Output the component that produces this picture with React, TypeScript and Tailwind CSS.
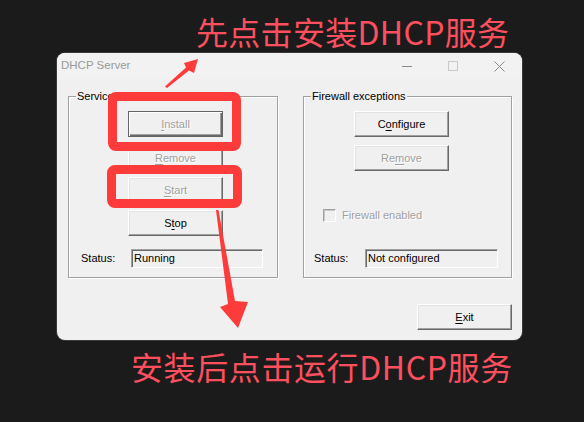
import React from 'react'

const ui = "font-['Liberation_Sans',Arial,sans-serif]"
const cjk = "font-['Noto_Sans_CJK_SC','Noto_Sans',sans-serif]"

function Label({ text, u }: { text: string; u: number }) {
  return (
    <span>
      {text.slice(0, u)}
      <span className="underline underline-offset-2">{text[u]}</span>
      {text.slice(u + 1)}
    </span>
  )
}

function Btn({
  text,
  u,
  disabled,
  def,
  className = '',
}: {
  text: string
  u: number
  disabled?: boolean
  def?: boolean
  className?: string
}) {
  const frame = def
    ? 'border border-[#646464] shadow-[inset_1px_1px_0_#fff,inset_-1px_-1px_0_#696969,inset_-2px_-2px_0_#a0a0a0]'
    : 'border border-t-white border-l-white border-r-[#696969] border-b-[#696969] shadow-[inset_-1px_-1px_0_#a0a0a0,inset_1px_1px_0_#e3e3e3]'
  const tone = disabled ? 'text-[#a0a0a0] [text-shadow:1px_1px_0_#fff]' : 'text-black'
  return (
    <div
      className={`flex h-[26px] w-[95px] items-center justify-center bg-[#f0f0f0] text-[11px] ${frame} ${tone} ${className}`}
    >
      <Label text={text} u={u} />
    </div>
  )
}

function StatusRow({ value, labelW, labelMl }: { value: string; labelW: string; labelMl: string }) {
  return (
    <div className="flex h-[19px] items-center">
      <span className={`${labelMl} ${labelW} text-[11px] text-black`}>Status:</span>
      <div className="flex h-[19px] flex-1 items-center border border-t-[#a0a0a0] border-l-[#a0a0a0] border-b-white border-r-white bg-[#f0f0f0] pl-[2px] text-[11px] text-black shadow-[inset_1px_1px_0_#696969]">
        {value}
      </div>
    </div>
  )
}

function Group({ title, width, children }: { title: string; width: string; children: React.ReactNode }) {
  return (
    <fieldset
      className={`${width} border border-[#a0a0a0] px-0 pb-[9px] shadow-[inset_1px_1px_0_#fff,1px_1px_0_#fff]`}
    >
      <legend className="ml-[7px] bg-[#f0f0f0] px-[1px] text-[11px] leading-[14px] text-black">{title}</legend>
      {children}
    </fieldset>
  )
}

function DhcpWindow() {
  return (
    <div className={`ml-[57px] mt-[6px] flex h-[287px] w-[465px] flex-col overflow-hidden rounded-[8px] bg-[#f0f0f0] shadow-[0_0_0_1px_#3a3a3a] ${ui}`}>
      <div className="flex h-[26px] shrink-0 items-center bg-[#f2f2f2]">
        <span className="pl-[4px] text-[11.5px] text-[#999999]">DHCP Server</span>
        <div className="ml-auto flex h-full">
          <div className="flex w-[46px] items-center justify-center">
            <svg width="10" height="10" viewBox="0 0 10 10">
              <path d="M0 5.5h10" stroke="#8a8a8a" strokeWidth="1" />
            </svg>
          </div>
          <div className="flex w-[46px] items-center justify-center">
            <svg width="10" height="10" viewBox="0 0 10 10">
              <rect x="0.5" y="0.5" width="9" height="9" fill="none" stroke="#c8c8c8" strokeWidth="1" />
            </svg>
          </div>
          <div className="flex w-[46px] items-center justify-center">
            <svg width="11" height="11" viewBox="0 0 11 11">
              <path d="M0.5 0.5l10 10M10.5 0.5l-10 10" stroke="#8a8a8a" strokeWidth="1" />
            </svg>
          </div>
        </div>
      </div>

      <div className="flex flex-col pl-[11px] pr-[10px] pt-[10px]">
        <div className="flex gap-[25px]">
          <Group title="Services" width="w-[210px]">
            <Btn text="Install" u={0} disabled def className="ml-[59px] mt-[8px]" />
            <Btn text="Remove" u={0} disabled className="ml-[59px] mt-[8px]" />
            <Btn text="Start" u={0} disabled className="ml-[59px] mt-[6px]" />
            <Btn text="Stop" u={1} className="ml-[59px] mt-[7px]" />
            <div className="mt-[13px] pr-[14px]">
              <StatusRow value="Running" labelMl="ml-[12px]" labelW="w-[50px]" />
            </div>
          </Group>

          <Group title="Firewall exceptions" width="w-[209px]">
            <Btn text="Configure" u={1} className="ml-[50px] mt-[8px]" />
            <Btn text="Remove" u={2} disabled className="ml-[50px] mt-[8px]" />
            <div className="ml-[19px] mt-[38px] flex h-[13px] items-center gap-[6px]">
              <div className="h-[13px] w-[13px] border border-t-[#a0a0a0] border-l-[#a0a0a0] border-b-white border-r-white bg-[#f0f0f0] shadow-[inset_1px_1px_0_#c8c8c8]" />
              <span className="text-[11px] text-[#a0a0a0] [text-shadow:1px_1px_0_#fff]">Firewall enabled</span>
            </div>
            <div className="mt-[27px] pr-[13px]">
              <StatusRow value="Not configured" labelMl="ml-[10px]" labelW="w-[51px]" />
            </div>
          </Group>
        </div>

        <div className="mt-[26px] flex justify-end">
          <Btn text="Exit" u={0} className="h-[25px]" />
        </div>
      </div>
    </div>
  )
}

export default function App() {
  return (
    <div className="relative h-[422px] w-[584px] overflow-hidden bg-[#1b1b1b] pt-[15px]">
      <div className={`pl-[196px] text-[32px] leading-[32px] tracking-[0.3px] text-[#fd4f5e] ${cjk}`}>
        先点击安装DHCP服务
      </div>

      <DhcpWindow />

      <div className={`mt-[10px] pl-[131px] text-[32px] leading-[32px] tracking-[0.6px] text-[#fd4f5e] ${cjk}`}>
        安装后点击运行DHCP服务
      </div>

      {/* annotation overlays */}
      <div className="pointer-events-none absolute left-[108px] top-[92px] h-[59px] w-[133px] rounded-[8px] border-[9px] border-[#fe3b3b]" />
      <div className="pointer-events-none absolute left-[107px] top-[165px] h-[43px] w-[135px] rounded-[8px] border-[9px] border-[#fe3b3b]" />
      <svg className="pointer-events-none absolute left-0 top-0" width="584" height="422" viewBox="0 0 584 422">
        <polygon points="165,86.5 186,67.5 184,63 198,59 194,73 189,70.5 167,88" fill="#fe3b3b" />
        <polygon points="216,210 218.5,210 235,301 248,302 238,328 220,307 228,304" fill="#fe3b3b" />
      </svg>
    </div>
  )
}
